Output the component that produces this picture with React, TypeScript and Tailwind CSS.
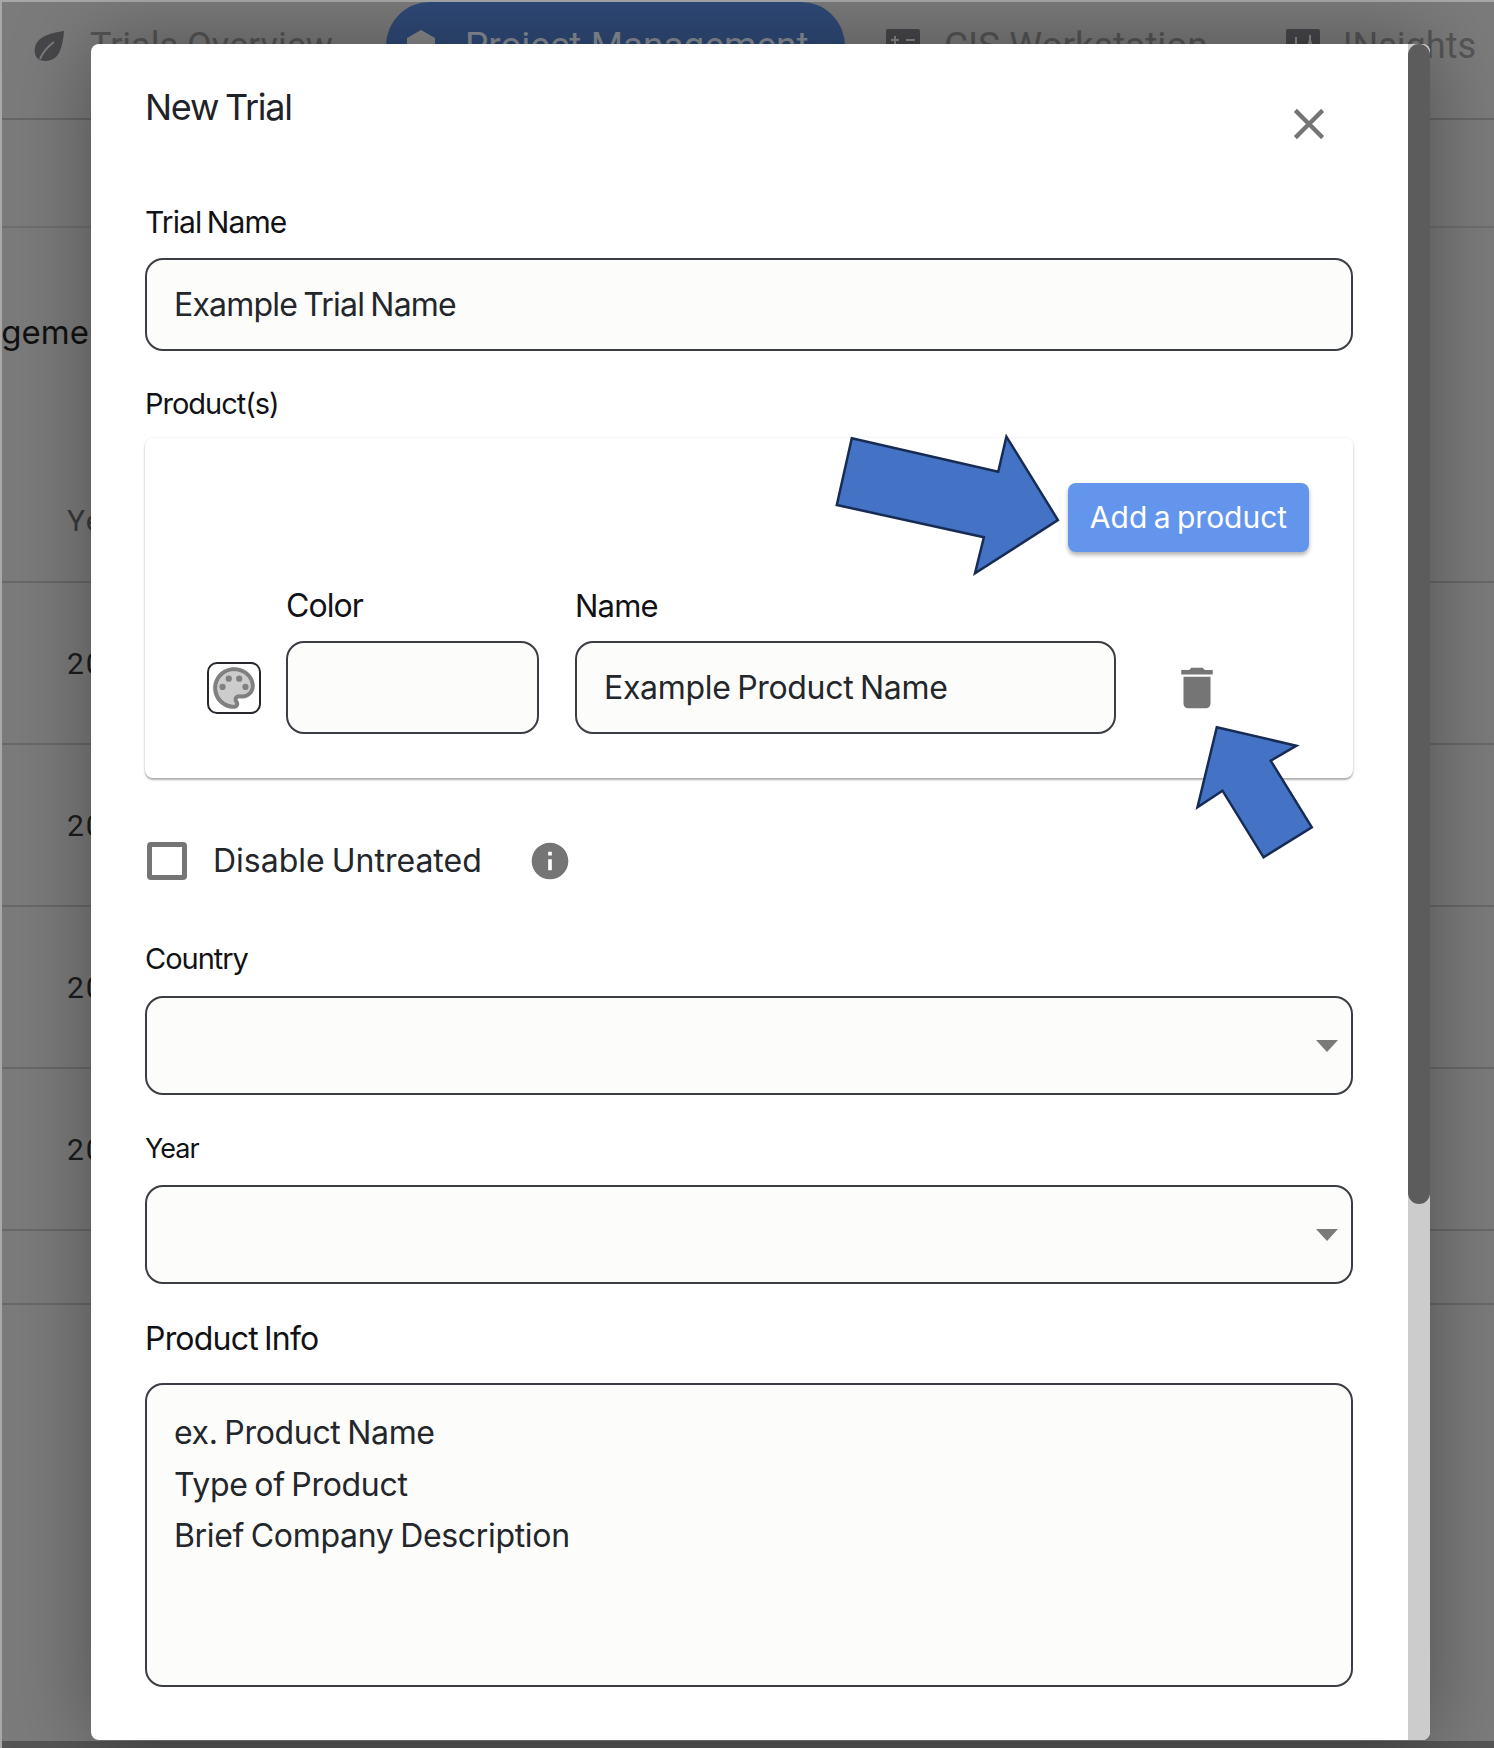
import React from "react";

const font = "font-['Inter','Noto_Sans',sans-serif]";

const Label = ({ children, className = "" }: { children: React.ReactNode; className?: string }) => (
  <div className={`h-9 leading-9 [word-spacing:-2px] text-[#111216] ${className}`}>{children}</div>
);

const Field = ({ children, className = "" }: { children?: React.ReactNode; className?: string }) => (
  <div
    className={`flex h-[93px] items-center rounded-[18px] border-2 border-[#3a3d44] bg-[#fcfcfa] px-[27px] text-[32px] [word-spacing:-2px] text-[#23262b] ${className}`}
  >
    {children}
  </div>
);

const SelectField = ({ className = "" }: { className?: string }) => (
  <div className={`flex items-center justify-end rounded-[18px] border-2 border-[#3a3d44] bg-[#fcfcfa] pr-[13px] ${className}`}>
    <div className="h-0 w-0 border-x-[11px] border-t-[12px] border-x-transparent border-t-[#7a7a78]" />
  </div>
);

const TableRow = ({ text }: { text: string }) => (
  <div className="flex h-[162px] shrink-0 items-center border-b-2 border-[#686868] pl-[65px] font-['Roboto',sans-serif] text-[30px] tracking-[0.06em] text-[#1c1c1c]">
    {text}
  </div>
);

export default function App() {
  return (
    <div className={`relative h-[1748px] w-full overflow-hidden bg-[#7b7b7b] ${font}`}>
      {/* page behind the dialog */}
      <div className="flex h-full flex-col border-t-2 border-l-2 border-[#a8a8a8]">
        <div className="flex h-[118px] shrink-0 items-start border-b-2 border-[#666666] pl-8 font-['Roboto',sans-serif] text-[36px] whitespace-nowrap text-[#555555]">
          <div className="flex h-[88px] shrink-0 items-center">
            <svg viewBox="0 0 30 30" className="h-[30px] w-[30px]">
              <path d="M30 0C30 0 29 20 22 26C16 31 7 31 3 27C-1 22 0 13 6 8C13 2 30 0 30 0Z" fill="#47474b" />
              <path d="M6 28C9 21 13 16 20 11" stroke="#7b7b7b" strokeWidth="2" fill="none" />
            </svg>
            <span className="ml-[26px]">Trials Overview</span>
          </div>
          <div className="ml-[53px] flex h-[110px] w-[459px] shrink-0 items-start rounded-t-[44px] bg-[#2f4a78] pl-[21px] text-[37px] text-[#8a8f98]">
            <div className="flex h-[88px] items-center">
              <svg viewBox="0 0 28 32" className="h-8 w-7">
                <polygon points="14,0 28,8 28,32 0,32 0,8" fill="#8a8a8a" />
              </svg>
              <span className="ml-[30px]">Project Management</span>
            </div>
          </div>
          <div className="ml-[41px] flex h-[88px] shrink-0 items-center">
            <svg viewBox="0 0 34 34" className="h-[34px] w-[34px]">
              <rect width="34" height="34" rx="2" fill="#47474b" />
              <path d="M5 11h8M9 7v8M20 11h9" stroke="#8a8a8a" strokeWidth="2" />
            </svg>
            <span className="ml-6 text-[37px]">CIS Workstation</span>
          </div>
          <div className="ml-[78px] flex h-[88px] shrink-0 items-center">
            <svg viewBox="0 0 34 34" className="h-[34px] w-[34px]">
              <rect width="34" height="34" rx="2" fill="#47474b" />
              <path d="M10 8v14M24 6v5M21 20l3-9 3 9" stroke="#8a8a8a" strokeWidth="2" fill="none" />
            </svg>
            <span className="ml-[23px]">INsights</span>
          </div>
        </div>
        <div className="h-[108px] shrink-0 border-b-2 border-[#6e6e6e]" />
        <div className="h-[355px] shrink-0 border-b-2 border-[#686868]">
          <div className="-ml-[87px] mt-[82px] h-11 text-[33px] leading-[44px] whitespace-nowrap text-[#111111]">
            Management
          </div>
          <div className="mt-[144px] pl-[65px] font-['Roboto',sans-serif] text-[30px] tracking-[0.06em] text-[#3a3a3a]">Year</div>
        </div>
        <TableRow text="2023" />
        <TableRow text="2022" />
        <TableRow text="2021" />
        <TableRow text="2020" />
        <div className="h-[74px] shrink-0 border-b-2 border-[#686868]" />
        <div className="flex-1" />
        <div className="h-[7px] shrink-0 bg-[#555555]" />
      </div>

      {/* dialog */}
      <div className="absolute top-[44px] left-[91px] flex h-[1696px] w-[1339px] overflow-hidden rounded-lg bg-white shadow-[0_0_80px_rgba(0,0,0,0.35)]">
        <div className="flex-1 pr-[55px] pl-[54px]">
          <div className="flex h-[161px] items-start justify-between">
            <h2 className="mt-[40px] text-[36px] leading-[46px] font-normal tracking-[-0.035em] [word-spacing:-2px] text-[#1f2228]">
              New Trial
            </h2>
            <svg viewBox="0 0 24 24" className="mt-[54px] mr-[18px] h-[52px] w-[52px]" fill="#757575">
              <path d="M19 6.41 17.59 5 12 10.59 6.41 5 5 6.41 10.59 12 5 17.59 6.41 19 12 13.41 17.59 19 19 17.59 13.41 12z" />
            </svg>
          </div>
          <Label className="-mt-[1px] mb-[18px] text-[30px] tracking-[-0.03em]">Trial Name</Label>
          <Field className="tracking-[-0.025em]">Example Trial Name</Field>

          <Label className="mt-[35px] mb-4 text-[29px] tracking-[-0.035em]">Product(s)</Label>
          <div className="h-[340px] rounded-lg bg-white px-[44px] pt-[45px] shadow-[0_2px_2px_rgba(0,0,0,0.3),0_0_3px_rgba(0,0,0,0.08)]">
            <div className="flex justify-end">
              <button className="h-[69px] w-[241px] rounded-lg bg-[#6495ed] text-[30px] tracking-normal [word-spacing:-2px] text-white shadow-[0_3px_4px_rgba(0,0,0,0.3)]">
                Add a product
              </button>
            </div>
            <div className="mt-9 flex items-end pl-[18px]">
              <div className="mb-5 flex h-[52px] w-[54px] items-center justify-center rounded-[10px] border-2 border-[#26282e] bg-white">
                <svg viewBox="0 0 24 24" className="h-[50px] w-[50px]">
                  <path
                    d="M12 4c-4.41 0-8 3.59-8 8s3.59 8 8 8c.28 0 .5-.22.5-.5 0-.16-.08-.28-.14-.35-.41-.46-.63-1.05-.63-1.65 0-1.38 1.12-2.5 2.5-2.5H16c2.21 0 4-1.79 4-4 0-3.86-3.59-7-8-7z"
                    fill="#cccccc"
                  />
                  <path
                    d="M12 22C6.49 22 2 17.51 2 12S6.49 2 12 2s10 4.04 10 9c0 3.31-2.69 6-6 6h-1.77c-.28 0-.5.22-.5.5 0 .12.05.23.13.33.41.47.64 1.06.64 1.67 0 1.38-1.12 2.5-2.5 2.5zm0-18c-4.41 0-8 3.59-8 8s3.59 8 8 8c.28 0 .5-.22.5-.5 0-.16-.08-.28-.14-.35-.41-.46-.63-1.05-.63-1.65 0-1.38 1.12-2.5 2.5-2.5H16c2.21 0 4-1.79 4-4 0-3.86-3.59-7-8-7z"
                    fill="#808080"
                  />
                  <circle cx="6.5" cy="11.5" r="1.5" fill="#808080" />
                  <circle cx="9.5" cy="7.5" r="1.5" fill="#808080" />
                  <circle cx="14.5" cy="7.5" r="1.5" fill="#808080" />
                  <circle cx="17.5" cy="11.5" r="1.5" fill="#808080" />
                </svg>
              </div>
              <div className="ml-[25px] w-[253px]">
                <Label className="mb-[17px] text-[32px] tracking-[-0.03em]">Color</Label>
                <Field />
              </div>
              <div className="ml-9 w-[541px]">
                <Label className="mb-[17px] text-[31px] tracking-[-0.025em]">Name</Label>
                <Field className="tracking-[-0.01em]">Example Product Name</Field>
              </div>
              <svg viewBox="0 0 24 24" className="mb-[19px] ml-[54px] h-[54px] w-[54px]" fill="#757575">
                <path d="M6 19c0 1.1.9 2 2 2h8c1.1 0 2-.9 2-2V7H6v12zM19 4h-3.5l-1-1h-5l-1 1H5v2h14V4z" />
              </svg>
            </div>
          </div>

          <div className="mt-16 flex h-[38px] items-center pl-[2px]">
            <div className="h-[38px] w-10 rounded-[4px] border-[5px] border-[#757575]" />
            <span className="ml-[26px] text-[32px] tracking-normal [word-spacing:-2px] text-[#23262b]">Disable Untreated</span>
            <svg viewBox="0 0 24 24" className="ml-[46px] h-11 w-11" fill="#757575">
              <path d="M12 2C6.48 2 2 6.48 2 12s4.48 10 10 10 10-4.48 10-10S17.52 2 12 2zm1 15h-2v-6h2v6zm0-8h-2V7h2v2z" />
            </svg>
          </div>

          <Label className="mt-[61px] mb-[19px] text-[29px] tracking-[-0.035em]">Country</Label>
          <SelectField className="h-[99px]" />
          <Label className="mt-9 mb-[18px] text-[27px] tracking-[-0.035em]">Year</Label>
          <SelectField className="h-[99px]" />
          <Label className="mt-[37px] mb-[26px] text-[32px] tracking-[-0.025em]">Product Info</Label>
          <div className="h-[304px] rounded-[18px] border-2 border-[#3a3d44] bg-[#fcfcfa] px-[27px] pt-[22px] text-[32px] leading-[51.5px] tracking-[-0.01em] [word-spacing:-2px] text-[#23262b]">
            <div>ex. Product Name</div>
            <div>Type of Product</div>
            <div>Brief Company Description</div>
          </div>
        </div>
        {/* scrollbar */}
        <div className="w-[22px] shrink-0 bg-[#cccccc]">
          <div className="h-[1160px] rounded-full bg-[#5c5c5c]" />
        </div>
      </div>

      {/* annotation arrows */}
      <svg viewBox="0 0 1494 1748" className="pointer-events-none absolute inset-0 h-full w-full">
        <polygon
          points="851.8,438.3 998.2,471.7 1006.4,436.7 1057.9,520 975,573.3 983.9,537.3 836.8,505"
          fill="#4472c4"
          stroke="#172c54"
          strokeWidth="2.5"
        />
        <polygon
          points="1216.8,727.3 1296.4,745.7 1270.7,760.7 1311.8,827.3 1263.6,857.3 1222.5,790.7 1197.5,807.3"
          fill="#4472c4"
          stroke="#172c54"
          strokeWidth="2.5"
        />
      </svg>
    </div>
  );
}
